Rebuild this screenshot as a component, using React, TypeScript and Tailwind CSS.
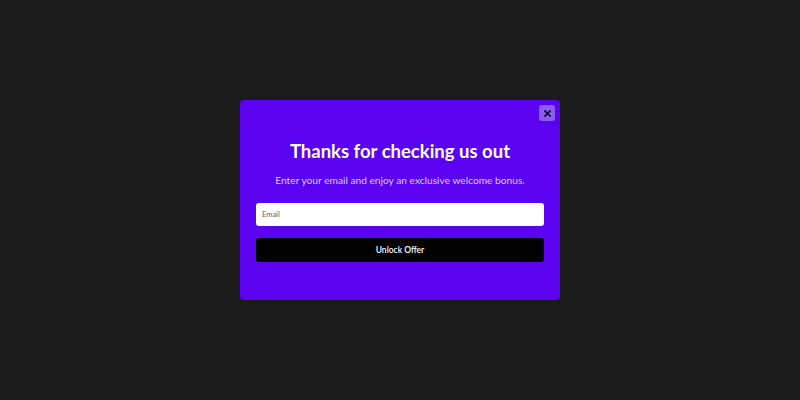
import React from "react";

export default function App() {
  return (
    <div className="w-[800px] h-[400px] bg-[#1b1b1b] flex items-center justify-center" style={{ fontFamily: "Lato, 'Noto Sans', sans-serif" }}>
      <div className="relative w-[320px] h-[200px] bg-[#5b03f0] rounded-[4px] px-4 pt-[38px] flex flex-col items-center">
        <button className="absolute top-[5px] right-[5px] w-4 h-4 rounded-[3px] bg-[#8a5cf6] flex items-center justify-center">
          <svg width="7" height="7" viewBox="0 0 8 8">
            <path d="M1 1L7 7M7 1L1 7" stroke="#12082e" strokeWidth="1.8" strokeLinecap="round" />
          </svg>
        </button>
        <h1 className="text-white font-bold text-[18.5px] leading-[26px]">Thanks for checking us out</h1>
        <p className="mt-[9px] text-[#d9ccff] text-[10.2px] leading-[14px]">Enter your email and enjoy an exclusive welcome bonus.</p>
        <input
          className="mt-[16px] w-full h-[23px] bg-white rounded-[3px] px-[6px] text-[7.5px] text-gray-700 placeholder:text-[#555a66] outline-none"
          placeholder="Email"
        />
        <button className="mt-[12px] w-full h-[24px] bg-black rounded-[3px] text-white text-[8.5px] font-semibold">Unlock Offer</button>
      </div>
    </div>
  );
}
